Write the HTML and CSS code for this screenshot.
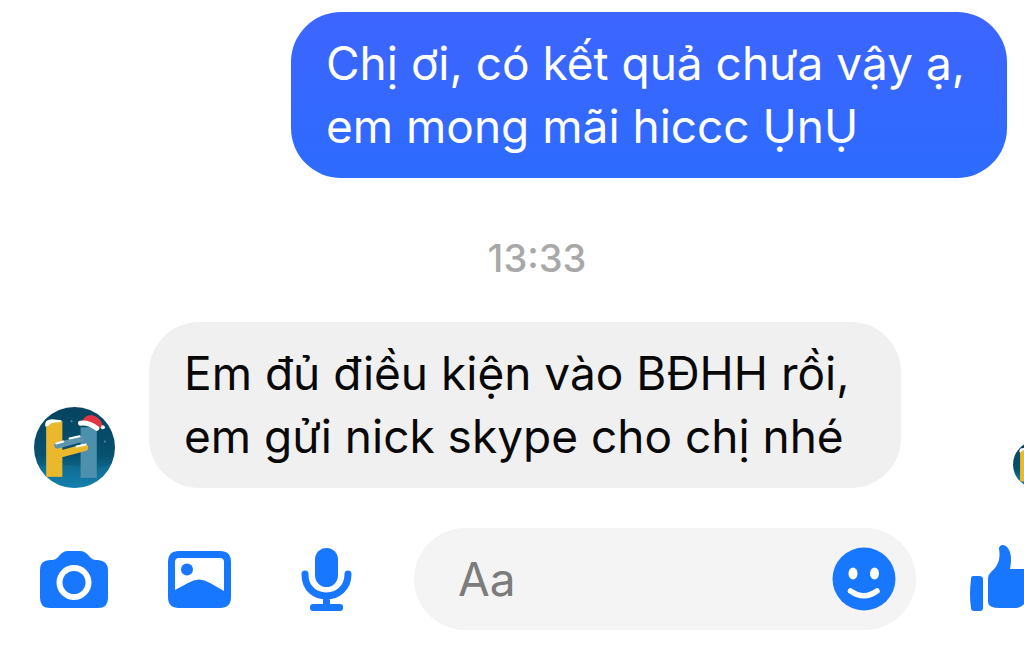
FILE: index.html
```html
<!DOCTYPE html>
<html lang="vi">
<head>
    <meta charset="UTF-8">
    <meta name="viewport" content="width=device-width, initial-scale=1.0">
    <title>Tin nhắn</title>
    <link rel="stylesheet" href="styles.css">
</head>
<body>
    <!-- avatar, used in two sizes -->
    <svg class="symbols" aria-hidden="true">
        <defs>
            <linearGradient id="night" x1="0" y1="0" x2="0" y2="1">
                <stop offset="0" stop-color="#064360"/>
                <stop offset="0.6" stop-color="#07516f"/>
                <stop offset="1" stop-color="#1687b5"/>
            </linearGradient>
            <clipPath id="round"><circle cx="40" cy="40" r="40"/></clipPath>
        </defs>
        <symbol id="avatar" viewBox="0 0 80 80">
            <g clip-path="url(#round)">
                <rect width="80" height="80" fill="url(#night)"/>
                <path d="M0 60Q22 54 42 59T80 54V80H0Z" fill="#1379a5" opacity="0.4"/>
                <rect x="12" y="14" width="16" height="55" fill="#e9b82d"/>
                <rect x="46" y="20" width="16" height="50" fill="#4c90ae"/>
                <path d="M23 38L46 32" stroke="#5d93ac" stroke-width="6" stroke-linecap="round"/>
                <path d="M24 47L50 40" stroke="#e9b82d" stroke-width="7" stroke-linecap="round"/>
                <path d="M22 36L29 34M35 31L45 29M42 39L51 37" stroke="#fff" stroke-width="2" stroke-linecap="round"/>
                <path d="M11 19Q10 12 18 12L27 13Q28 15 24 15Q20 15 17 16Q13 20 11 19Z" fill="#fff"/>
                <path d="M47 16Q49 8 57 8Q66 10 68 19L62 22Q55 16 47 16Z" fill="#e23445"/>
                <path d="M46 16Q54 15 62 21" fill="none" stroke="#fff" stroke-width="5" stroke-linecap="round"/>
                <circle cx="68" cy="20" r="2" fill="#fff"/>
                <circle cx="37" cy="14" r="1" fill="#5b8ca0"/>
                <circle cx="70" cy="34" r="1" fill="#5b8ca0"/>
            </g>
        </symbol>
    </svg>

    <div class="screen">
        <main class="chat">
            <div class="row sent">
                <p class="bubble">Chị ơi, có kết quả chưa vậy ạ, em mong mãi hiccc ỤnỤ</p>
            </div>
            <time class="time" datetime="13:33">13:33</time>
            <div class="row received">
                <svg class="avatar" role="img" aria-label="Ảnh đại diện"><use href="#avatar"/></svg>
                <p class="bubble">Em đủ điều kiện vào BĐHH rồi, em gửi nick skype cho chị nhé</p>
                <svg class="seen" role="img" aria-label="Đã xem"><use href="#avatar"/></svg>
            </div>
        </main>

        <form class="composer">
            <div class="tools">
                <button type="button" class="icon" aria-label="Máy ảnh">
                    <svg viewBox="0 0 70 70">
                        <path fill-rule="evenodd" d="M11 16H13Q17 16 20 12Q24 7 29 7H41Q46 7 50 12Q53 16 57 16H59Q69 17 69 26V54Q69 64 59 64H11Q1 64 1 54V26Q1 16 11 16ZM35 21A17.500 17.500 0 1 0 35 56A17.500 17.500 0 1 0 35 21Z"/>
                        <circle cx="35" cy="38.500" r="11.500"/>
                    </svg>
                </button>
                <button type="button" class="icon" aria-label="Thư viện ảnh">
                    <svg viewBox="0 0 70 70">
                        <path fill-rule="evenodd" d="M14 7H55Q66 7 66 18V53Q66 64 55 64H14Q3 64 3 53V18Q3 7 14 7ZM14 14Q10 14 10 18V46L23 39Q34 32 45 39L59 47V18Q59 14 55 14Z"/>
                        <circle cx="22" cy="25.500" r="6"/>
                    </svg>
                </button>
                <button type="button" class="icon" aria-label="Ghi âm">
                    <svg viewBox="0 0 70 70">
                        <rect x="24" y="4" width="23" height="39" rx="11.500"/>
                        <path d="M14 30V31C14 59 57 59 57 30V30M35.500 52V63" fill="none" stroke="#1877ff" stroke-width="7" stroke-linecap="round"/>
                        <rect x="19" y="60" width="33" height="7" rx="3"/>
                    </svg>
                </button>
            </div>
            <div class="field">
                <input type="text" class="message" placeholder="Aa" aria-label="Tin nhắn">
                <button type="button" class="emoji" aria-label="Biểu tượng cảm xúc">
                    <svg viewBox="0 0 64 64">
                        <circle cx="32" cy="32" r="31.500"/>
                        <ellipse cx="21" cy="26.500" rx="4.500" ry="6" fill="#fff"/>
                        <ellipse cx="42.500" cy="26.500" rx="4.500" ry="6" fill="#fff"/>
                        <path d="M18.500 44Q32 53.500 45 44" fill="none" stroke="#fff" stroke-width="5.500" stroke-linecap="round"/>
                    </svg>
                </button>
            </div>
            <button type="button" class="icon" aria-label="Thích">
                <svg viewBox="0 0 70 70">
                    <path d="M4 32H10Q14 32 14 35V64Q14 67 11 67H5Q2 67 2 64Q0 51 2 35Q2 32 4 32Z"/>
                    <path d="M30 5Q30 1 34 1Q38 1 41 8Q43 15 41 25H58Q65 26 64 33Q66 38 63 42Q64 48 60 51Q60 57 55 60Q52 64 46 64H31Q19 64 19 58V34Q19 31 22 28Q28 23 30 16Q31 10 30 5Z"/>
                </svg>
            </button>
        </form>
    </div>
</body>
</html>
```
FILE: styles.css
```css
* {
    box-sizing: border-box;
}

body {
    margin: 0;
    background-color: #fff;
    font-family: Inter, "Liberation Sans", sans-serif;
    font-size: 46px;
    line-height: 63px;
    color: #080808;
    overflow: hidden;
}

.symbols {
    display: block;
    width: 0;
    height: 0;
}

/* the conversation runs a little past the right edge */
.screen {
    width: calc(100% + 50px);
    padding-top: 12px;
}

.chat {
    display: flex;
    flex-direction: column;
}

.row {
    display: flex;
    align-items: flex-end;
}

.bubble {
    margin: 0;
    padding: 20px 35px;
    border-radius: 50px;
}

.sent {
    justify-content: flex-end;
    padding-right: 67px;
}

.sent .bubble {
    max-width: 716px;
    background: linear-gradient(#3d65ff, #2d6bff);
    color: #fff;
}

.received {
    padding: 0 14px 0 34px;
}

.received .bubble {
    max-width: 752px;
    margin-left: 34px;
    background-color: #f0f0f0;
}

.time {
    margin: 56px 0 40px;
    text-align: center;
    font-size: 38px;
    font-weight: 500;
    line-height: 48px;
    color: #a8a8a8;
}

.avatar {
    flex: none;
    width: 81px;
    height: 81px;
}

.seen {
    flex: none;
    width: 47px;
    height: 47px;
    margin-left: auto;
}

.composer {
    display: flex;
    align-items: center;
    gap: 53px;
    padding: 40px 35px 16px 39px;
}

.tools {
    display: flex;
    gap: 56px;
}

button {
    flex: none;
    padding: 0;
    border: none;
    background: none;
    cursor: pointer;
}

button svg {
    display: block;
    width: 100%;
    height: 100%;
    fill: #1877ff;
}

.icon {
    width: 70px;
    height: 70px;
}

.field {
    display: flex;
    flex: 1;
    align-items: center;
    min-width: 0;
    height: 102px;
    padding: 0 20px 0 44px;
    border-radius: 51px;
    background-color: #f4f4f4;
}

.message {
    flex: 1;
    min-width: 0;
    padding: 0;
    border: none;
    outline: none;
    background: none;
    font: inherit;
    color: #080808;
}

.message::placeholder {
    color: #7c7c7c;
    opacity: 1;
}

.emoji {
    width: 64px;
    height: 64px;
}
```
